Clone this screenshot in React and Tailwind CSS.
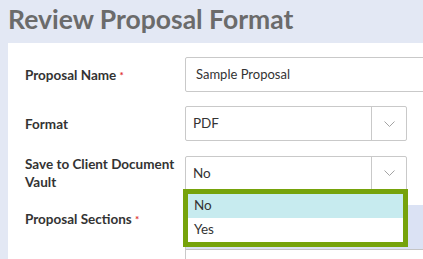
import React from "react";

function Chevron() {
  return (
    <svg width="11" height="6" viewBox="0 0 11 6" fill="none">
      <polyline points="0.5,0.5 5.5,5.5 10.5,0.5" stroke="#a3a3a3" strokeWidth="1" />
    </svg>
  );
}

function Select({ value }) {
  return (
    <div className="flex h-[35px] w-[222px] border border-[#c9c9c9] rounded-[2px] bg-white">
      <div className="flex-1 flex items-center pl-[7px] text-[13.5px] text-[#333]">{value}</div>
      <div className="w-[35px] border-l border-[#c9c9c9] flex items-center justify-center">
        <Chevron />
      </div>
    </div>
  );
}

export default function App() {
  return (
    <div
      className="w-[423px] h-[259px] overflow-hidden bg-[#e3e8f4] flex flex-col"
      style={{ fontFamily: "Lato, 'Open Sans', sans-serif" }}
    >
      <h1 className="pl-[8px] pt-[4px] text-[26.5px] leading-[30px] font-bold text-[#6b6b6b] whitespace-nowrap">
        Review Proposal Format
      </h1>
      <div className="ml-[8px] mt-[9px] flex-1 bg-white pl-[17px] pt-[14px] flex flex-col gap-[14px]">
        <div className="flex items-center">
          <div className="w-[160px] shrink-0 text-[13.5px] leading-[18px] font-bold text-[#333]">
            Proposal Name <span className="text-[#e03131] text-[10px] align-top">*</span>
          </div>
          <div className="h-[35px] w-[260px] shrink-0 border border-[#c9c9c9] rounded-[2px] flex items-center pl-[10px] text-[13px] text-[#333]">
            Sample Proposal
          </div>
        </div>
        <div className="flex items-center">
          <div className="w-[160px] shrink-0 text-[13.5px] leading-[18px] font-bold text-[#333]">Format</div>
          <Select value="PDF" />
        </div>
        <div className="flex items-center">
          <div className="w-[160px] shrink-0 text-[13.5px] leading-[18px] font-bold text-[#333]">
            Save to Client Document
            <br />
            Vault
          </div>
          <div className="relative z-10">
            <Select value="No" />
            <div className="absolute left-[-2px] top-[33px] w-[225px] border-[5px] border-[#76a30b] bg-white text-[13.5px] text-[#333]">
              <div className="h-[24px] flex items-center pl-[6px] bg-[#c7ebef]">No</div>
              <div className="h-[24px] flex items-center pl-[6px]">Yes</div>
            </div>
          </div>
        </div>
        <div className="flex items-start">
          <div className="w-[160px] shrink-0 pt-[5px] text-[13.5px] leading-[18px] font-bold text-[#333]">
            Proposal Sections <span className="text-[#e03131] text-[10px] align-top">*</span>
          </div>
          <div className="flex-1 border-l border-[#c9c9c9] h-[80px]">
            <div className="h-[45px] bg-[#dbe2f4] border-b border-[#c4c4c4]" />
          </div>
        </div>
      </div>
    </div>
  );
}
